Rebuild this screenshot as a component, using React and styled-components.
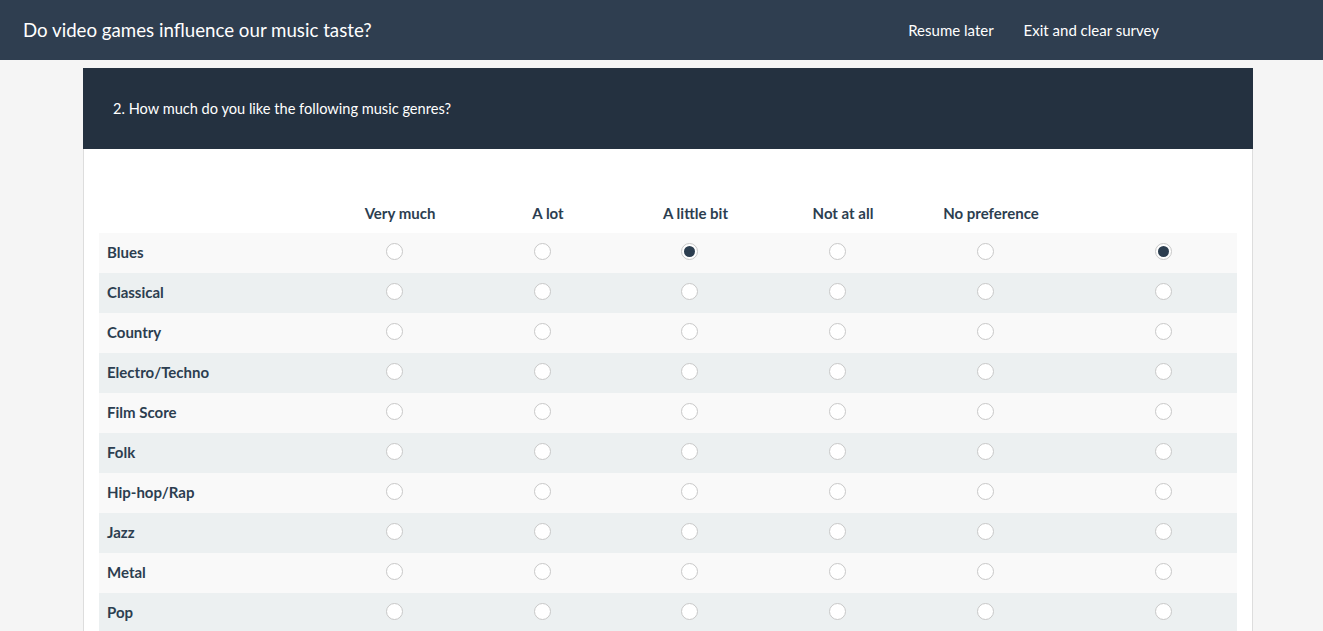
import React from "react";
import styled, { createGlobalStyle } from "styled-components";

const Global = createGlobalStyle`
  html, body { margin: 0; padding: 0; background: #f5f5f5; }
  body { font-family: Lato, "Open Sans", sans-serif; color: #2c3e50; }
  * { box-sizing: border-box; }
`;

const TopBar = styled.header`
  height: 60px;
  background: #2f3e50;
  display: flex;
  align-items: center;
  padding: 0 23px;
  color: #fff;
`;

const Title = styled.h1`
  margin: 0;
  font-size: 18.7px;
  font-weight: 400;
  flex: 1;
`;

const Nav = styled.nav`
  display: flex;
  gap: 30px;
  margin-right: 141px;
`;

const NavLink = styled.a`
  font-size: 15px;
  color: #fff;
  text-decoration: none;
  cursor: pointer;
`;

const Main = styled.main`
  padding: 8px 0 0 83px;
  display: flex;
`;

const Card = styled.section`
  width: 1170px;
  background: #fff;
  border: 1px solid #ddd;
  border-top: none;
`;

const QuestionHead = styled.div`
  height: 81px;
  margin: 0 -1px;
  background: #243140;
  color: #fff;
  font-size: 14.6px;
  display: flex;
  align-items: center;
  padding-left: 30px;
  padding-bottom: 1px;
`;

const Body = styled.div`
  padding: 44px 15px 0 15px;
`;

const Grid = styled.div`
  display: grid;
  grid-template-columns: 221px 148px 148px 147px 148px 148px 178px;
`;

const HeadCell = styled.div`
  height: 40px;
  display: flex;
  align-items: center;
  justify-content: center;
  padding-left: 12px;
  font-size: 15px;
  font-weight: 700;
  color: #2c3e50;
`;

const Row = styled.div`
  display: contents;
  & > * { background: ${(p) => (p.$alt ? "#ecf0f1" : "#f9f9f9")}; }
`;

const Label = styled.div`
  height: 40px;
  display: flex;
  align-items: center;
  padding: 0 0 2px 8px;
  font-size: 15px;
  font-weight: 700;
  color: #2c3e50;
`;

const Cell = styled.div`
  height: 40px;
  display: flex;
  align-items: center;
  justify-content: center;
  padding-bottom: 4px;
  padding-left: ${(p) => (p.$last ? "31px" : "0")};
`;

const Radio = styled.span`
  width: 17px;
  height: 17px;
  border-radius: 50%;
  border: 1px solid #c8c8c8;
  background: #fff;
  display: flex;
  align-items: center;
  justify-content: center;
  &::after {
    content: "";
    width: 11px;
    height: 11px;
    border-radius: 50%;
    background: ${(p) => (p.$on ? "#2c3e50" : "transparent")};
  }
`;

const columns = ["Very much", "A lot", "A little bit", "Not at all", "No preference", ""];
const genres = [
  "Blues",
  "Classical",
  "Country",
  "Electro/Techno",
  "Film Score",
  "Folk",
  "Hip-hop/Rap",
  "Jazz",
  "Metal",
  "Pop",
];

export default function App() {
  return (
    <>
      <Global />
      <TopBar>
        <Title>Do video games influence our music taste?</Title>
        <Nav>
          <NavLink>Resume later</NavLink>
          <NavLink>Exit and clear survey</NavLink>
        </Nav>
      </TopBar>
      <Main>
        <Card>
          <QuestionHead>2. How much do you like the following music genres?</QuestionHead>
          <Body>
            <Grid>
              <HeadCell />
              {columns.map((c, i) => (
                <HeadCell key={i}>{c}</HeadCell>
              ))}
              {genres.map((g, r) => (
                <Row key={g} $alt={r % 2 === 1}>
                  <Label>{g}</Label>
                  {columns.map((c, i) => (
                    <Cell key={i} $last={i === 5}>
                      <Radio $on={r === 0 && (i === 2 || i === 5)} />
                    </Cell>
                  ))}
                </Row>
              ))}
            </Grid>
          </Body>
        </Card>
      </Main>
    </>
  );
}
